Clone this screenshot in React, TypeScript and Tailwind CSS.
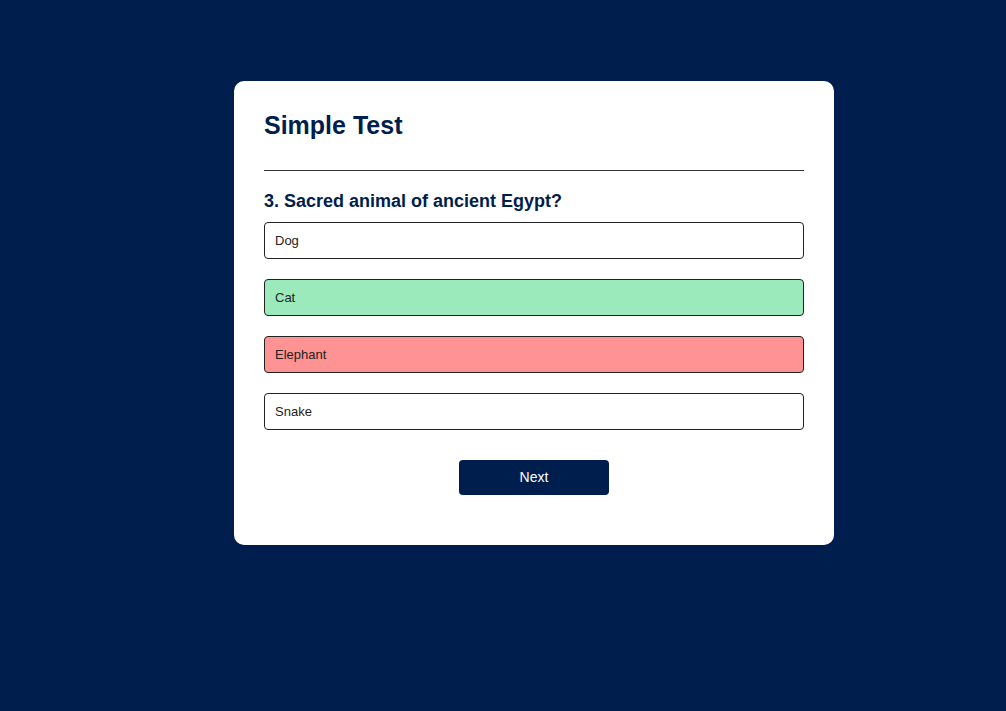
export default function App() {
  const options = [
    { label: "Dog", bg: "bg-white" },
    { label: "Cat", bg: "bg-[#9aeabc]" },
    { label: "Elephant", bg: "bg-[#ff9393]" },
    { label: "Snake", bg: "bg-white" },
  ];
  return (
    <div className="min-h-[711px] w-full bg-[#001e4d] pt-[81px] pl-[234px] font-['Liberation_Sans',Arial,sans-serif]">
      <div className="w-[600px] rounded-[10px] bg-white px-[30px] pt-[30px] pb-[50px]">
        <h1 className="text-[25px] leading-[29px] font-bold text-[#001e4d]">Simple Test</h1>
        <div className="mt-[30px] h-px bg-[#333]" />
        <h2 className="mt-[20px] text-[18px] leading-[21px] font-bold text-[#001e4d]">
          3. Sacred animal of ancient Egypt?
        </h2>
        <div className="mt-[10px] flex flex-col gap-[20px]">
          {options.map((o) => (
            <div
              key={o.label}
              className={`h-[37px] flex items-center rounded-[4px] border border-[#222] px-[10px] text-[13px] text-[#222] ${o.bg}`}
            >
              {o.label}
            </div>
          ))}
        </div>
        <div className="mt-[30px] flex justify-center">
          <button className="h-[35px] w-[150px] rounded-[4px] bg-[#001e4d] text-[14px] font-medium text-white">
            Next
          </button>
        </div>
      </div>
    </div>
  );
}
